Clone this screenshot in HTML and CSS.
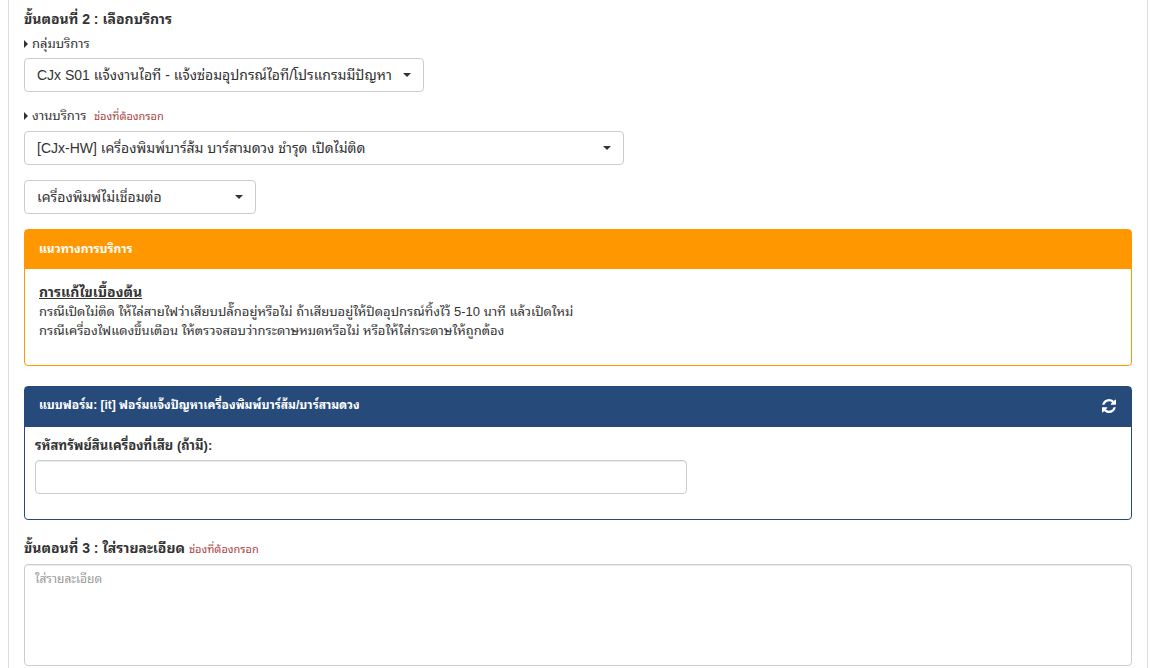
FILE: index.html
```html
<!DOCTYPE html>
<html lang="th">
<head>
<meta charset="utf-8">
<meta name="viewport" content="width=device-width, initial-scale=1">
<title>แจ้งงานบริการ</title>
<link rel="stylesheet" href="styles.css">
</head>
<body>
<main class="page">
  <form class="sheet">
    <h2 class="step">ขั้นตอนที่ 2 : เลือกบริการ</h2>
    <label class="caption" for="group"><span class="arrow"></span>กลุ่มบริการ</label>
    <div class="picker picker-group">
      <select id="group"><option>CJx S01 แจ้งงานไอที - แจ้งซ่อมอุปกรณ์ไอที/โปรแกรมมีปัญหา</option></select>
    </div>
    <label class="caption caption-next" for="service"><span class="arrow"></span>งานบริการ <span class="required">ช่องที่ต้องกรอก</span></label>
    <div class="picker picker-service">
      <select id="service"><option>[CJx-HW] เครื่องพิมพ์บาร์ส้ม บาร์สามดวง ชำรุด เปิดไม่ติด</option></select>
    </div>
    <div class="picker picker-issue">
      <select aria-label="อาการ"><option>เครื่องพิมพ์ไม่เชื่อมต่อ</option></select>
    </div>

    <section class="panel panel-guide">
      <h3 class="panel-head">แนวทางการบริการ</h3>
      <div class="panel-body guide">
        <strong class="guide-title">การแก้ไขเบื้องต้น</strong>
        <p>กรณีเปิดไม่ติด ให้ไล่สายไฟว่าเสียบปลั๊กอยู่หรือไม่ ถ้าเสียบอยู่ให้ปิดอุปกรณ์ทิ้งไว้ 5-10 นาที แล้วเปิดใหม่</p>
        <p>กรณีเครื่องไฟแดงขึ้นเตือน ให้ตรวจสอบว่ากระดาษหมดหรือไม่ หรือให้ใส่กระดาษให้ถูกต้อง</p>
      </div>
    </section>

    <section class="panel panel-form">
      <div class="panel-head">
        <h3>แบบฟอร์ม: [it] ฟอร์มแจ้งปัญหาเครื่องพิมพ์บาร์ส้ม/บาร์สามดวง</h3>
        <button class="refresh" type="button" aria-label="โหลดใหม่">
          <svg viewBox="0 0 1536 1536" width="14" height="14" fill="currentColor"><path d="M1511 928q0 5-1 7-64 268-268 434.500T764 1536q-146 0-282.500-55T238 1324l-129 129q-19 19-45 19t-45-19-19-45V960q0-26 19-45t45-19h448q26 0 45 19t19 45-19 45l-137 137q71 66 161 102t187 36q134 0 250-65t186-179q11-17 53-117 8-23 30-23h192q13 0 22.500 9.500t9.500 22.500zm25-800v448q0 26-19 45t-45 19h-448q-26 0-45-19t-19-45 19-45l138-138Q969 256 768 256q-134 0-250 65T332 500q-11 17-53 117-8 23-30 23H50q-13 0-22.500-9.500T18 608v-7q65-268 270-434.500T768 0q146 0 284 55.500T1297 212l130-129q19-19 45-19t45 19 19 45z"/></svg>
        </button>
      </div>
      <div class="panel-body fields">
        <label class="field-label" for="asset">รหัสทรัพย์สินเครื่องที่เสีย (ถ้ามี):</label>
        <input class="text-box" id="asset" type="text">
      </div>
    </section>

    <label class="step step-detail" for="detail">ขั้นตอนที่ 3 : ใส่รายละเอียด <span class="required">ช่องที่ต้องกรอก</span></label>
    <textarea class="text-box detail" id="detail" placeholder="ใส่รายละเอียด"></textarea>
  </form>
</main>
</body>
</html>
```
FILE: styles.css
```css
* { box-sizing: border-box; }
body {
  margin: 0;
  background: #fff;
  color: #333;
  font: 13px/19px "Liberation Sans", "Noto Sans Thai Looped", "Loma", "Waree", "Noto Sans Thai", sans-serif;
}
h2, h3, p { margin: 0; }
button, input, select, textarea { font: inherit; color: inherit; }
.page { padding: 0 2px 0 8px; }
.sheet {
  display: flex;
  flex-direction: column;
  min-height: 100vh;
  padding: 9px 15px 2px;
  border: solid #ddd;
  border-width: 0 1px;
}
.step { font-size: 14px; font-weight: 700; line-height: 20px; }
.caption { display: block; margin: 5px 0 4px; line-height: 20px; }
.caption-next { margin: 14px 0 5px; }
.arrow {
  display: inline-block;
  margin-right: 4px;
  border: 4px solid transparent;
  border-left-color: #333;
  border-right-width: 0;
}
.required { color: #a94442; font-size: 11px; font-weight: 400; }
.caption .required { margin-left: 4px; }
.picker { position: relative; max-width: 100%; }
.picker::after {
  position: absolute;
  top: 15px;
  right: 13px;
  border: 4px solid transparent;
  border-top-color: #333;
  border-bottom-width: 0;
  content: "";
  pointer-events: none;
}
.picker select {
  appearance: none;
  width: 100%;
  height: 34px;
  padding: 0 24px 0 12px;
  border: 1px solid #ccc;
  border-radius: 4px;
  background: #fff;
  font-size: 14px;
}
.picker-group { width: 400px; }
.picker-service { width: 600px; }
.picker-issue { width: 232px; margin-top: 15px; }
.panel { border: 1px solid; border-radius: 4px; }
.panel-head {
  display: flex;
  align-items: center;
  justify-content: space-between;
  min-height: 39px;
  padding: 0 15px 0 14px;
  color: #fff;
}
.panel-head, .panel-head h3 { font-size: 12px; font-weight: 700; }
.panel-guide { margin-top: 15px; border-color: #ff9800; }
.panel-guide .panel-head { background: #ff9800; }
.guide { padding: 14px 14px 25px; }
.guide-title { display: block; font-size: 14px; text-decoration: underline; }
.panel-form { margin-top: 20px; border-color: #264b7a; }
.panel-form .panel-head { min-height: 40px; padding-bottom: 3px; background: #264b7a; }
.refresh { display: flex; padding: 0; border: 0; background: none; color: #fff; cursor: pointer; }
.fields { padding: 9px 10px 25px; }
.field-label { display: block; margin-bottom: 4px; font-weight: 700; line-height: 20px; }
.text-box {
  display: block;
  border: 1px solid #ccc;
  border-radius: 4px;
  background: #fff;
  box-shadow: inset 0 1px 1px rgba(0, 0, 0, .075);
}
input.text-box { width: 60%; height: 34px; padding: 6px 12px; }
.step-detail { margin-top: 18px; }
.detail { width: 100%; height: 102px; margin-top: 5px; padding: 5px 10px; resize: none; }
.detail::placeholder { color: #999; opacity: 1; font-size: 12px; }
```
